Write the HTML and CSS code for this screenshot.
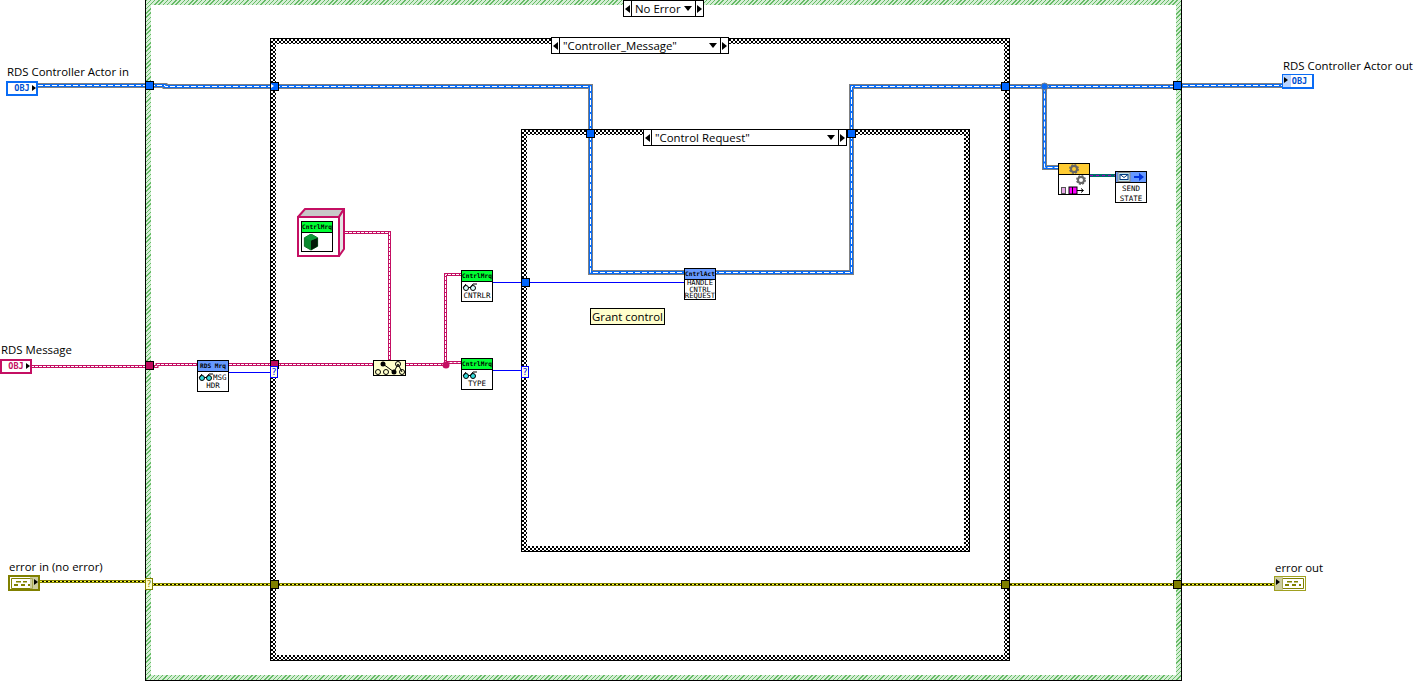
FILE: index.html
```html
<!DOCTYPE html>
<html lang="en">
<head>
<meta charset="utf-8">
<title>RDS Controller block diagram</title>
<link rel="stylesheet" href="styles.css">
</head>
<body>
<main class="canvas">
  <section class="case case-outer"><div class="case-inner"></div></section>
  <section class="case case-mid"><div class="case-inner"></div></section>
  <section class="case case-in"><div class="case-inner"></div></section>

  <svg class="wires" width="1415" height="681" viewBox="0 0 1415 681">
    <defs>
      <path id="w-actor" d="M38 85.500H165V86.500H590.500V272.500H851.500V86.500H1177V85.500H1282M1044.500 86.500V167.500H1058"/>
      <path id="w-msg" d="M31 366.500H157V364.500H373M406 364.500H445.500V274.500H461M445.500 362.500H461M345 232.500H389.500V360"/>
      <path id="w-err" d="M40 581.500H146M152 584.500H1275"/>
      <path id="w-teal" d="M1090 175.500H1115"/>
    </defs>
    <use href="#w-actor" class="s-grey"/>
    <use href="#w-actor" class="s-blue"/>
    <use href="#w-actor" class="s-white"/>
    <use href="#w-msg" class="s-pink"/>
    <use href="#w-msg" class="s-pink-link"/>
    <circle cx="446" cy="365" r="3.500" class="f-pink"/>
    <circle cx="1044.500" cy="86.500" r="3.500" class="f-blue"/>
    <use href="#w-err" class="s-olive"/>
    <use href="#w-err" class="s-black"/>
    <use href="#w-err" class="s-yellow"/>
    <use href="#w-teal" class="s-teal"/>
    <use href="#w-teal" class="s-purple"/>
    <path d="M229 372.500H270M493 282.500H684M493 370.500H521" class="s-thin"/>
  </svg>

  <div class="tunnel t-blue t1"></div>
  <div class="tunnel t-blue t2"><i class="tri"></i></div>
  <div class="tunnel t-blue t3"></div>
  <div class="tunnel t-blue t4"></div>
  <div class="tunnel t-blue t5"></div>
  <div class="tunnel t-blue t6"></div>
  <div class="tunnel t-blue t7"></div>
  <div class="tunnel t-pink t8"></div>
  <div class="tunnel t-pink t9"></div>
  <div class="tunnel t-olive t10"></div>
  <div class="tunnel t-olive t11"></div>
  <div class="tunnel t-olive t12"></div>
  <div class="query q-blue q1">?</div>
  <div class="query q-blue q2">?</div>
  <div class="query q-yellow q3">?</div>

  <div class="selector sel-a">
    <span class="arrow"><i class="tri-l"></i></span>
    <span class="sel-text">No Error<i class="tri-d"></i></span>
    <span class="arrow"><i class="tri-r"></i></span>
  </div>
  <div class="selector sel-b">
    <span class="arrow"><i class="tri-l"></i></span>
    <span class="sel-text">"Controller_Message"<i class="tri-d"></i></span>
    <span class="arrow"><i class="tri-r"></i></span>
  </div>
  <div class="selector sel-c">
    <span class="arrow"><i class="tri-l"></i></span>
    <span class="sel-text">"Control Request"<i class="tri-d"></i></span>
    <span class="arrow"><i class="tri-r"></i></span>
  </div>

  <div class="label l-actor-in">RDS Controller Actor in</div>
  <div class="term obj blue-term term-actor-in"><span class="obj-text">OBJ</span><i class="term-tri term-tri-r"></i></div>
  <div class="label l-msg">RDS Message</div>
  <div class="term obj pink-term term-msg"><span class="obj-text">OBJ</span><i class="term-tri term-tri-r"></i></div>
  <div class="label l-err-in">error in (no error)</div>
  <div class="term err-term err-in">
    <svg width="22" height="11" viewBox="0 0 22 11" class="err-ic"><path d="M.5.5H21.500V10.500H.5Z" class="ic-olive-line"/><path d="M5 3h5v1.500H5zM12 3h4v1.500h-4zM3 6h4v2H3zM10 6h4v2h-4zM17 6h2v2h-2z" class="ic-olive"/></svg>
    <i class="term-shade term-shade-r"></i><i class="term-tri term-tri-r"></i>
  </div>
  <div class="label l-actor-out">RDS Controller Actor out</div>
  <div class="term obj out blue-term term-actor-out"><i class="term-shade-blue"></i><i class="term-tri term-tri-l"></i><span class="obj-text obj-text-out">OBJ</span></div>
  <div class="label l-err-out">error out</div>
  <div class="term out err-term err-out">
    <i class="term-shade term-shade-l"></i><i class="term-tri term-tri-l"></i>
    <svg width="22" height="11" viewBox="0 0 22 11" class="err-ic"><path d="M.5.5H21.500V10.500H.5Z" class="ic-olive-line"/><path d="M5 3h5v1.500H5zM12 3h4v1.500h-4zM3 6h4v2H3zM10 6h4v2h-4zM17 6h2v2h-2z" class="ic-olive"/></svg>
  </div>

  <div class="node n-rdsmrq">
    <div class="head head-blue">RDS Mrq</div>
    <div class="body">
      <div class="row"><svg width="16" height="9" viewBox="0 0 16 9"><circle cx="4" cy="5" r="2.500" class="lens"/><circle cx="11" cy="5" r="2.500" class="lens"/><path d="M1 5L4 1M8 5L11 1M6.500 4.500H8.500M11 1H15" class="rim"/></svg><span class="msg">MSG</span></div>
      <div class="line">HDR</div>
    </div>
  </div>

  <div class="const-box">
    <svg class="const-faces" width="48" height="49" viewBox="0 0 48 49">
      <path d="M1 9L8 1H47L42 9Z" class="face-top"/>
      <path d="M42 9L47 1V41L42 48Z" class="face-side"/>
      <rect x="1" y="9" width="41" height="39" class="face-front"/>
    </svg>
    <div class="const-inner">
      <div class="head head-green">CntrlMrq</div>
      <svg class="cube" width="16" height="18" viewBox="0 0 16 18"><path d="M8 0L15 4V13L8 17L1 13V4Z" class="cube-l"/><path d="M8 7L15 4V13L8 17Z" class="cube-r"/><path d="M8 0L15 4L8 7L1 4Z" class="cube-t"/></svg>
    </div>
  </div>

  <div class="tree">
    <svg width="30" height="14" viewBox="0 0 30 14">
      <circle cx="8" cy="3" r="2.500" class="dot-k"/><circle cx="23" cy="3" r="2.500" class="dot-o"/>
      <circle cx="3" cy="11" r="2.500" class="dot-o"/><circle cx="11" cy="11" r="2.500" class="dot-o"/><circle cx="19" cy="11" r="2.500" class="dot-k"/><circle cx="27" cy="11" r="2.500" class="dot-o"/>
      <path d="M8 3L19 11M23 3L27 11M23 3L19 11" class="rim"/>
    </svg>
  </div>

  <div class="node n-cntrlr">
    <div class="head head-green">CntrlMrq</div>
    <div class="body">
      <div class="row"><svg width="16" height="9" viewBox="0 0 16 9"><circle cx="4" cy="5" r="2.500" class="lens-w"/><circle cx="11" cy="5" r="2.500" class="lens-w"/><path d="M1 5L4 1M8 5L11 1M6.500 4.500H8.500M11 1H15" class="rim"/></svg></div>
      <div class="line">CNTRLR</div>
    </div>
  </div>
  <div class="node n-type">
    <div class="head head-green">CntrlMrq</div>
    <div class="body">
      <div class="row"><svg width="16" height="9" viewBox="0 0 16 9"><circle cx="4" cy="5" r="2.500" class="lens"/><circle cx="11" cy="5" r="2.500" class="lens"/><path d="M1 5L4 1M8 5L11 1M6.500 4.500H8.500M11 1H15" class="rim"/></svg></div>
      <div class="line">TYPE</div>
    </div>
  </div>
  <div class="node n-handle">
    <div class="head head-blue">CntrlAct</div>
    <div class="body body-tight">
      <div class="line">HANDLE</div>
      <div class="line">CNTRL</div>
      <div class="line">REQUEST</div>
    </div>
  </div>

  <div class="comment">Grant control</div>

  <div class="node n-gold">
    <div class="head head-gold">
      <svg width="10" height="10" viewBox="0 0 10 10"><circle cx="5" cy="5" r="3" class="gear"/><circle cx="5" cy="5" r="4.200" class="gear-teeth"/></svg>
    </div>
    <div class="body gold-body">
      <svg width="30" height="20" viewBox="0 0 30 20">
        <circle cx="22" cy="5" r="3" class="gear"/><circle cx="22" cy="5" r="4.200" class="gear-teeth"/>
        <rect x="2.500" y="12.500" width="4" height="6" class="q-pale"/>
        <rect x="10" y="12" width="8" height="7" class="q-mag"/>
        <path d="M13.500 12V19M18 15.500H24M22 13.500L24.500 15.500L22 17.500" class="rim"/>
      </svg>
    </div>
  </div>

  <div class="node n-send">
    <div class="head head-blue head-send">
      <svg width="28" height="10" viewBox="0 0 28 10">
        <rect x="1" y="0.500" width="12" height="9" class="env-back"/>
        <rect x="3" y="2.500" width="8" height="5" class="env"/>
        <path d="M3 2.500L7 5.500L11 2.500" class="env-line"/>
        <path d="M17 4H22V1L27 5L22 9V6H17Z" class="arr-blue"/>
      </svg>
    </div>
    <div class="body body-send">
      <div class="line">SEND</div>
      <div class="line">STATE</div>
    </div>
  </div>
</main>
</body>
</html>
```

FILE: styles.css
```css
html, body { margin: 0; padding: 0; background: #fff; }
body { width: 1415px; height: 681px; overflow: hidden; }
.canvas { position: relative; width: 1415px; height: 681px; overflow: hidden; font-family: "Open Sans", "Noto Sans", sans-serif; color: #000; }

.case { position: absolute; box-sizing: border-box; display: flex; }
.case-inner { flex: 1; background: #fff; }
.case-outer { left: 145px; top: -1px; width: 1037px; height: 682px; padding: 5px; border: 1px solid #000; background: repeating-linear-gradient(135deg, #66bb66 0 1px, #d5efd5 1px 3px); }
.case-mid, .case-in { border: 1px solid #000; padding: 5px; background: conic-gradient(#000 25%, #fff 0 50%, #000 0 75%, #fff 0) 0 0 / 4px 4px; }
.case-mid { left: 270px; top: 38px; width: 740px; height: 623px; }
.case-in { left: 521px; top: 129px; width: 449px; height: 423px; }

.wires { position: absolute; left: 0; top: 0; fill: none; }
.s-grey, .s-blue, .s-white, .s-pink, .s-pink-link, .s-olive, .s-black, .s-yellow, .s-teal, .s-purple, .s-thin { fill: none; }
.s-grey { stroke: #808080; stroke-width: 5; }
.s-blue { stroke: #0a6cf5; stroke-width: 3; }
.s-white { stroke: #fff; stroke-width: 1; stroke-dasharray: 5 2; }
.s-pink { stroke: #c40f63; stroke-width: 3; }
.s-pink-link { stroke: #fff; stroke-width: 1; stroke-dasharray: 3 1; }
.f-pink { fill: #c40f63; }
.f-blue { fill: #0a6cf5; stroke: #808080; }
.s-olive { stroke: #808000; stroke-width: 3; }
.s-black { stroke: #000; stroke-width: 1; }
.s-yellow { stroke: #ffff33; stroke-width: 1; stroke-dasharray: 2 2; }
.s-teal { stroke: #006b6b; stroke-width: 3; }
.s-purple { stroke: #a000c0; stroke-width: 1; stroke-dasharray: 3 3; }
.s-thin { stroke: #0000ff; stroke-width: 1; }

.tunnel { position: absolute; box-sizing: border-box; width: 9px; height: 9px; border: 1px solid #000; }
.t-blue { background: #0066ff; }
.t-pink { background: #bf0a5c; }
.t-olive { background: #808000; }
.t1 { left: 145px; top: 81px; }
.t2 { left: 270px; top: 82px; }
.t3 { left: 586px; top: 129px; }
.t4 { left: 847px; top: 129px; }
.t5 { left: 1001px; top: 82px; }
.t6 { left: 1173px; top: 81px; }
.t7 { left: 521px; top: 278px; }
.t8 { left: 145px; top: 361px; }
.t9 { left: 270px; top: 360px; }
.t10 { left: 270px; top: 580px; }
.t11 { left: 1001px; top: 580px; }
.t12 { left: 1173px; top: 580px; }
.tri { position: absolute; left: 0; top: 1px; border-left: 3px solid #fff; border-top: 2px solid transparent; border-bottom: 2px solid transparent; }

.query { position: absolute; box-sizing: border-box; width: 8px; height: 12px; border: 1px solid; background: #fff; font: 9px/10px "DejaVu Sans Mono", monospace; text-align: center; }
.q-blue { border-color: #0000ff; color: #0000ff; background: #ffffe0; }
.q-yellow { border-color: #808000; color: #808000; background: #ffffd0; }
.q1 { left: 270px; top: 366px; }
.q2 { left: 521px; top: 366px; }
.q3 { left: 145px; top: 578px; }

.selector { position: absolute; box-sizing: border-box; display: flex; height: 17px; border: 1px solid #000; background: #fff; font-size: 11.400px; line-height: 15px; }
.sel-a { left: 623px; top: 0; width: 81px; }
.sel-b { left: 551px; top: 37px; width: 178px; }
.sel-c { left: 643px; top: 129px; width: 204px; }
.arrow { flex: none; display: flex; align-items: center; justify-content: center; width: 7px; }
.sel-text { flex: 1; display: flex; justify-content: space-between; align-items: center; padding: 0 3px; border-left: 1px solid #000; border-right: 1px solid #000; white-space: nowrap; }
.tri-l, .tri-r, .tri-d { display: block; width: 0; height: 0; }
.tri-l { border-right: 5px solid #000; border-top: 4px solid transparent; border-bottom: 4px solid transparent; }
.tri-r { border-left: 5px solid #000; border-top: 4px solid transparent; border-bottom: 4px solid transparent; }
.tri-d { border-top: 5px solid #000; border-left: 4px solid transparent; border-right: 4px solid transparent; }

.label { position: absolute; font-size: 11.400px; line-height: 16px; white-space: nowrap; }
.l-actor-in { left: 7px; top: 64px; }
.l-msg { left: 1px; top: 342px; }
.l-err-in { left: 9px; top: 559px; }
.l-actor-out { left: 1283px; top: 58px; }
.l-err-out { left: 1275px; top: 560px; }

.term { position: absolute; box-sizing: border-box; display: flex; align-items: center; width: 32px; height: 15px; }
.obj { background: #fff; }
.blue-term { border: 2px solid #0a6cf5; color: #0050d0; }
.term-actor-in { left: 6px; top: 81px; }
.term-actor-out { left: 1282px; top: 74px; border-width: 1px 2px 2px 1px; }
.pink-term { border: 2px solid #c40f63; color: #c40f63; }
.term-msg { left: 0; top: 359px; }
.obj-text { flex: 1; text-align: center; font: bold 8.500px/11px "DejaVu Sans Mono", monospace; }
.obj-text-out { padding-left: 4px; }
.term-tri { position: absolute; top: 2px; width: 0; height: 0; border-top: 3px solid transparent; border-bottom: 3px solid transparent; }
.term-tri-r { right: 0; border-left: 4px solid #000; }
.term-tri-l { left: 1px; border-left: 4px solid #000; }
.term-shade-blue { position: absolute; left: 0; top: 0; bottom: 0; width: 8px; background: #b8d4ff; }
.err-term { background: #fff; border: 2px solid #808000; }
.err-term.out { border-width: 1px; border-color: #a0a020; }
.err-in { left: 8px; top: 575px; height: 16px; }
.err-out { left: 1274px; top: 576px; height: 15px; }
.err-in .err-ic { margin-left: 1px; }
.err-out .err-ic { margin-left: 7px; }
.term-shade { position: absolute; top: 0; bottom: 0; width: 8px; background: #b8b878; opacity: .7; }
.term-shade-r { right: 0; }
.term-shade-l { left: 0; }
.ic-olive { fill: #808000; }
.ic-olive-line { fill: #fff; stroke: #808000; }

.node { position: absolute; box-sizing: border-box; display: flex; flex-direction: column; width: 32px; height: 32px; border: 1px solid #000; background: #fff; }
.head { flex: none; box-sizing: border-box; height: 11px; border-bottom: 1px solid #000; font: bold 6.200px/10px "DejaVu Sans Mono", monospace; text-align: center; white-space: nowrap; overflow: hidden; }
.head-blue { background: #6699ff; }
.head-green { background: #00ff33; }
.head-gold { background: #ffcc33; display: flex; align-items: center; justify-content: center; }
.body { flex: 1; display: flex; flex-direction: column; align-items: center; font: 7.500px/9px "DejaVu Sans Mono", monospace; }
.row { display: flex; align-items: center; align-self: flex-start; padding: 1px 0 0 0; height: 8px; }
.msg { font: 7.500px/9px "DejaVu Sans Mono", monospace; margin-left: -1px; }
.line { font: 7.500px/10px "DejaVu Sans Mono", monospace; white-space: nowrap; }
.body-tight .line { font-size: 7.200px; line-height: 6.500px; }
.lens { fill: #33dddd; stroke: #000; stroke-width: 1; }
.lens-w { fill: #ddffff; stroke: #000; stroke-width: 1; }
.rim { fill: none; stroke: #000; stroke-width: 1; }
.n-rdsmrq { left: 197px; top: 360px; }
.n-cntrlr { left: 461px; top: 270px; }
.n-type { left: 461px; top: 358px; }
.n-handle { left: 684px; top: 268px; }
.n-gold { left: 1058px; top: 163px; }
.n-send { left: 1115px; top: 171px; }
.head-send { display: flex; align-items: center; justify-content: center; }
.body-send { padding-top: 1px; }
.gold-body { align-items: flex-start; }
.gear { fill: none; stroke: #666; stroke-width: 2; }
.gear-teeth { fill: none; stroke: #666; stroke-width: 1.500; stroke-dasharray: 2 1.300; }
.q-pale { fill: #e8a8e8; stroke: #555; }
.q-mag { fill: #ff00ff; stroke: #000; }
.env-back { fill: #b8e0ee; stroke: #888; }
.env { fill: #fff; stroke: #003a80; }
.env-line { fill: none; stroke: #003a80; }
.arr-blue { fill: #0033dd; }

.const-box { position: absolute; left: 297px; top: 208px; width: 48px; height: 49px; }
.const-faces { position: absolute; left: 0; top: 0; }
.face-top { fill: #c8c8c8; stroke: #c40f63; stroke-width: 2; }
.face-side { fill: #e4e4e4; stroke: #c40f63; stroke-width: 2; }
.face-front { fill: #fff; stroke: #c40f63; stroke-width: 2; }
.const-inner { position: absolute; box-sizing: border-box; left: 4px; top: 13px; width: 32px; height: 31px; border: 1px solid #000; background: #fff; display: flex; flex-direction: column; align-items: flex-start; }
.const-inner .head { align-self: stretch; }
.cube { margin: 1px 0 0 1px; }
.cube-l { fill: #0b8a2e; stroke: #0a6a20; }
.cube-r { fill: #041a08; }
.cube-t { fill: #0c9a38; }

.tree { position: absolute; box-sizing: border-box; left: 373px; top: 360px; width: 33px; height: 16px; border: 1px solid #000; background: #ffffcc; display: flex; align-items: center; justify-content: center; }
.dot-k { fill: #000; }
.dot-o { fill: #ffffcc; stroke: #000; }

.comment { position: absolute; box-sizing: border-box; left: 590px; top: 308px; width: 75px; height: 17px; border: 1px solid #000; background: #ffffcc; font-size: 11.400px; line-height: 15px; text-align: center; white-space: nowrap; }
```
